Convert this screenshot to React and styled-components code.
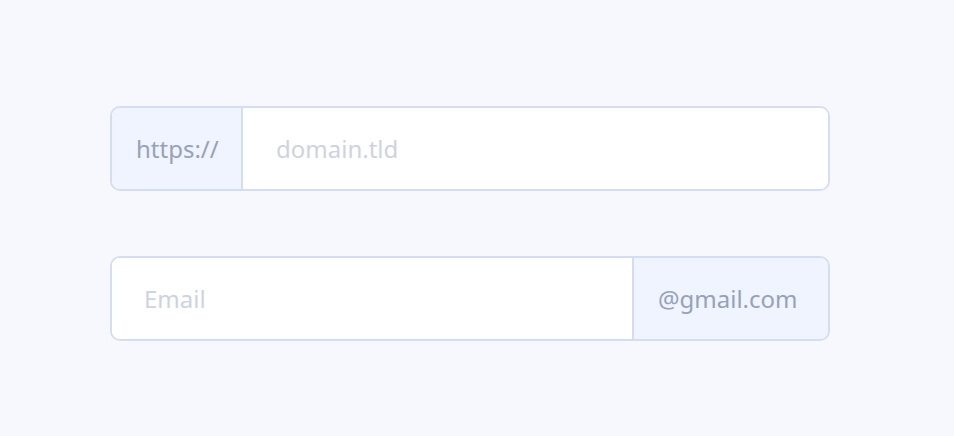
import React from "react";
import styled, { createGlobalStyle } from "styled-components";

const Global = createGlobalStyle`
  html, body { margin: 0; padding: 0; background: #f7f8fd; }
  body { font-family: "Noto Sans", "Open Sans", sans-serif; }
`;

const Page = styled.div`
  width: 954px;
  height: 436px;
  box-sizing: border-box;
  padding: 106px 124px 0 110px;
  display: flex;
  flex-direction: column;
  gap: 65px;
`;

const Group = styled.div`
  display: flex;
  height: 85px;
  box-sizing: border-box;
  border: 2px solid #d5ddf0;
  border-radius: 10px;
  overflow: hidden;
  background: #ffffff;
`;

const Addon = styled.div`
  display: flex;
  align-items: center;
  flex: 0 0 ${(p) => p.$w}px;
  box-sizing: border-box;
  padding-left: ${(p) => p.$pl}px;
  background: #eff4fe;
  color: #97a1bb;
  font-size: 24px;
  ${(p) => (p.$side === "left" ? "border-right: 2px solid #d5ddf0;" : "border-left: 2px solid #d5ddf0;")}
`;

const Field = styled.input`
  flex: 1;
  min-width: 0;
  border: none;
  outline: none;
  background: #ffffff;
  padding: 0 0 0 ${(p) => p.$pl}px;
  font-family: "Noto Sans", "Open Sans", sans-serif;
  font-size: 24px;
  color: #6b7590;
  &::placeholder { color: #cdd3e0; }
`;

export default function App() {
  return (
    <>
      <Global />
      <Page>
        <Group>
          <Addon $side="left" $w={131} $pl={24}>https://</Addon>
          <Field $pl={33} placeholder="domain.tld" />
        </Group>
        <Group>
          <Field $pl={32} placeholder="Email" />
          <Addon $side="right" $w={196} $pl={24}>@gmail.com</Addon>
        </Group>
      </Page>
    </>
  );
}
